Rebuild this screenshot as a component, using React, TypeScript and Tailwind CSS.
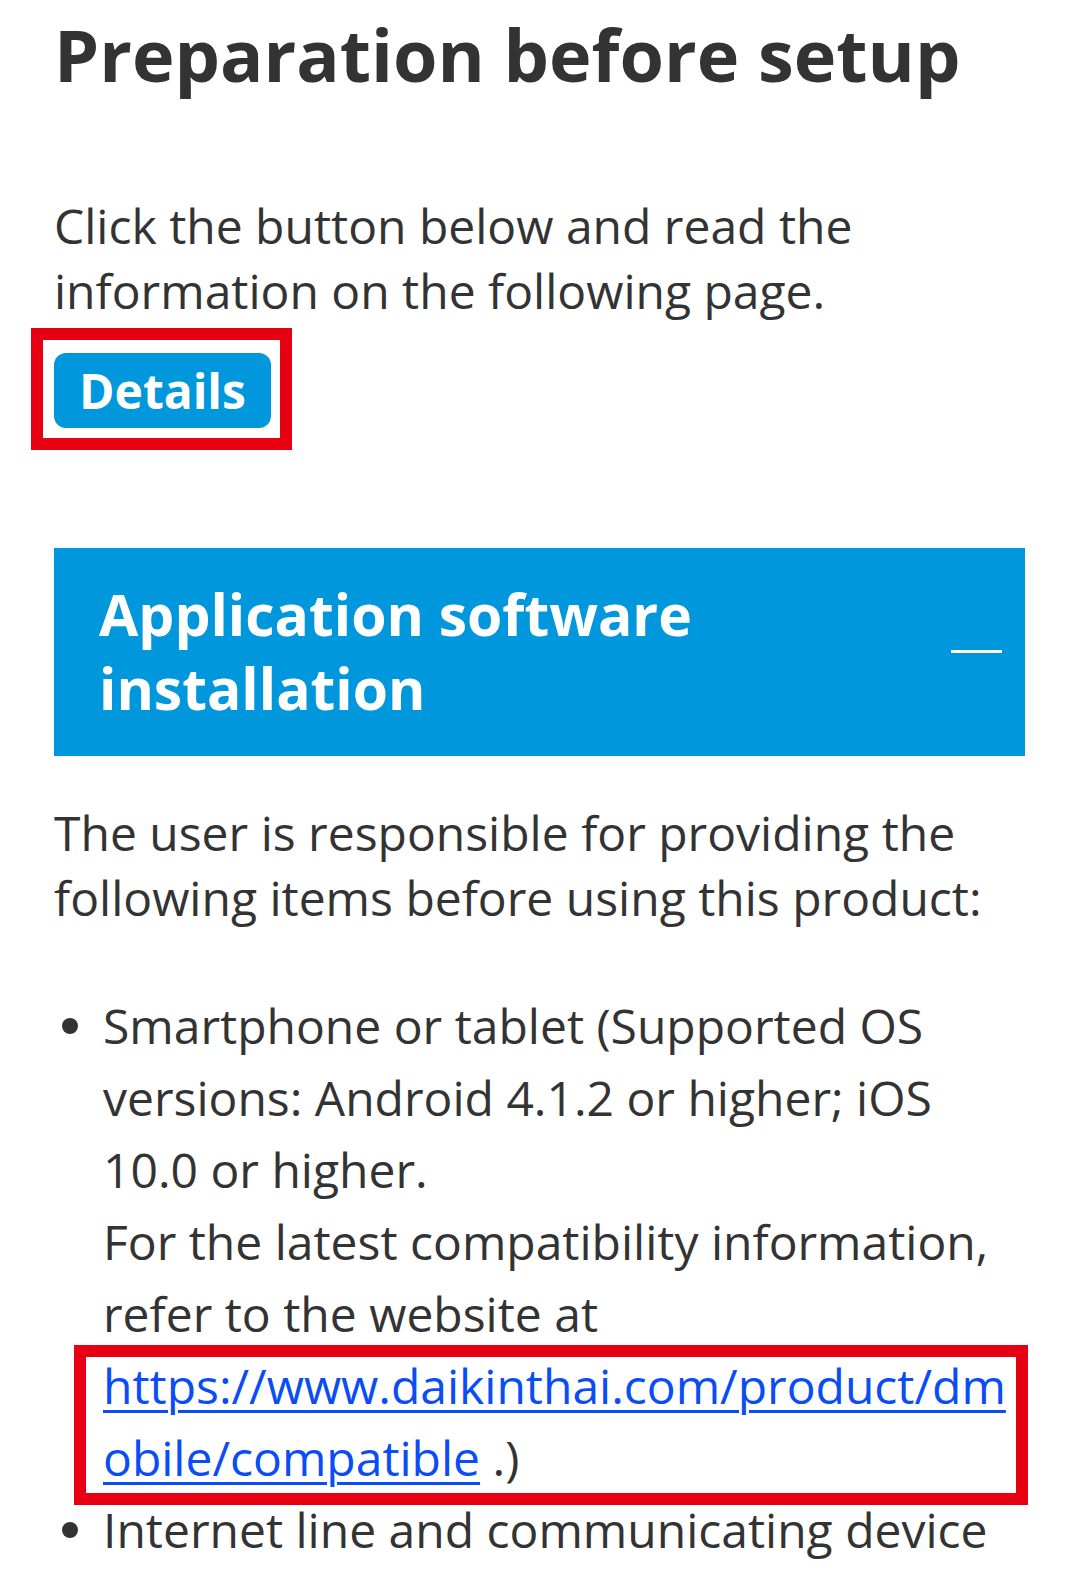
const items = [
  {
    key: "device",
    text: "Smartphone or tablet (Supported OS versions: Android 4.1.2 or higher; iOS 10.0 or higher.",
  },
];

export default function App() {
  return (
    <div className="min-h-screen bg-white pl-[54px] pr-[55px] text-[#333333] font-['Open_Sans',sans-serif]">
      <h1 className="pt-[11px] text-[72px] font-bold leading-[86px]">
        Preparation before setup
      </h1>

      <p className="mt-[96px] text-[48px] leading-[65px]">
        Click the button below and read the information on the following page.
      </p>

      {/* annotation frame around the button */}
      <div className="mt-[5px] -ml-[23px] inline-block border-[12px] border-[#e60012] pt-[13px] pl-[11px] pr-[9px] pb-[10px]">
        <button className="flex h-[75px] items-center rounded-[12px] bg-[#0097dd] px-[25px] text-[48px] font-bold text-white">
          Details
        </button>
      </div>

      <div className="mt-[98px] flex items-center justify-between bg-[#0097dd] pt-[29px] pb-[31px] pl-[45px] pr-[23px] text-white">
        <h2 className="text-[57px] font-bold leading-[74px]">
          Application software
          <br />
          installation
        </h2>
        <span className="block h-[3px] w-[51px] bg-white" />
      </div>

      <p className="mt-[44px] text-[48px] leading-[65px]">
        The user is responsible for providing the following items before using this product:
      </p>

      <ul className="mt-[60px] flex flex-col text-[48px] leading-[72px]">
        {items.map((it) => (
          <li key={it.key} className="flex">
            <span className="mt-[28px] ml-[8px] mr-[25px] h-[16px] w-[16px] shrink-0 rounded-full bg-[#333333]" />
            <div className="relative min-w-0 flex-1 [overflow-wrap:break-word]">
              {it.text}
              <br />
              For the latest compatibility information, refer to the website at{" "}
              <a
                href="#"
                className="text-[#0a4cf5] underline decoration-[3px] underline-offset-[6px]"
              >
                https://www.daikinthai.com/product/dmobile/compatible
              </a>{" "}
              .)
              {/* annotation frame around the link */}
              <div className="pointer-events-none absolute top-[355px] left-[-29px] h-[160px] w-[954px] border-[12px] border-[#e60012]" />
            </div>
          </li>
        ))}
        <li className="flex">
          <span className="mt-[28px] ml-[8px] mr-[25px] h-[16px] w-[16px] shrink-0 rounded-full bg-[#333333]" />
          <div className="min-w-0 flex-1">Internet line and communicating device</div>
        </li>
      </ul>
    </div>
  );
}
